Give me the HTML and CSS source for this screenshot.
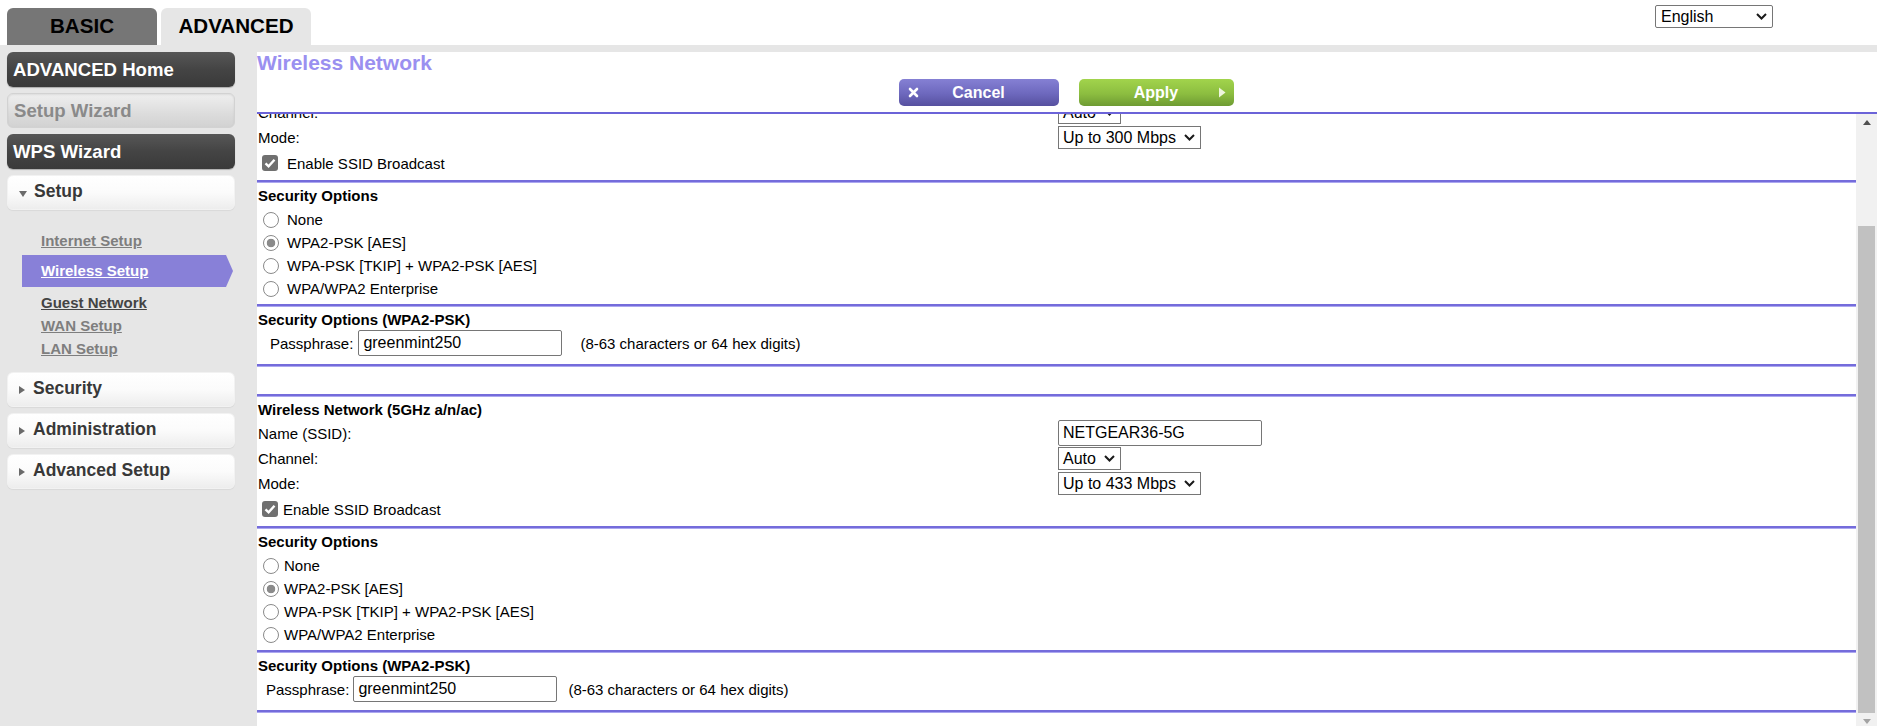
FILE: index.html
```html
<!DOCTYPE html>
<html lang="en">
<head>
<meta charset="utf-8">
<title>NETGEAR Router - Wireless Setup</title>
<link rel="stylesheet" href="styles.css">
</head>
<body>
<div class="top">
  <div class="tabs">
    <div class="tab tab-basic">BASIC</div>
    <div class="tab tab-adv">ADVANCED</div>
  </div>
  <div class="lang">
    <span>English</span>
    <svg class="chev" width="11" height="7" viewBox="0 0 11 7"><path d="M1 1 L5.5 5.5 L10 1" fill="none" stroke="#1a1a1a" stroke-width="2"/></svg>
  </div>
</div>
<div class="main">
  <nav class="side">
    <div class="btn dark">ADVANCED Home</div>
    <div class="btn light">Setup Wizard</div>
    <div class="btn dark">WPS Wizard</div>
    <div class="menu menu-open"><span class="tri tri-down"></span>Setup</div>
    <div class="sub">
      <a class="sl sl-gray">Internet Setup</a>
      <a class="sl sl-active">Wireless Setup</a>
      <a class="sl sl-dark">Guest Network</a>
      <a class="sl sl-gray">WAN Setup</a>
      <a class="sl sl-gray">LAN Setup</a>
    </div>
    <div class="menu"><span class="tri tri-right"></span>Security</div>
    <div class="menu"><span class="tri tri-right"></span>Administration</div>
    <div class="menu"><span class="tri tri-right"></span>Advanced Setup</div>
  </nav>
  <section class="content">
    <header class="chead">
      <h1>Wireless Network</h1>
      <div class="actions">
        <div class="abtn cancel">
          <span class="ic ic-left"><svg width="11" height="11" viewBox="0 0 11 11"><path d="M2 2 L9 9 M9 2 L2 9" stroke="#fff" stroke-width="2.6" stroke-linecap="round"/></svg></span>
          <span>Cancel</span>
          <span></span>
        </div>
        <div class="abtn apply">
          <span></span>
          <span>Apply</span>
          <span class="ic ic-right"><svg width="8" height="11" viewBox="0 0 8 11"><path d="M1 0.5 L7.5 5.5 L1 10.5 Z" fill="#eef6de"/></svg></span>
        </div>
      </div>
    </header>
    <div class="scrollwrap">
      <div class="scroll">
        <div class="inner">
          <!-- 2.4GHz section (scrolled; top rows above the view) -->
          <div class="row row-sel"><span>Channel:</span><span><span class="sel">Auto<svg class="chev" width="11" height="7" viewBox="0 0 11 7"><path d="M1 1 L5.5 5.5 L10 1" fill="none" stroke="#1a1a1a" stroke-width="2"/></svg></span></span></div>
          <div class="row row-sel"><span>Mode:</span><span><span class="sel">Up to 300 Mbps<svg class="chev" width="11" height="7" viewBox="0 0 11 7"><path d="M1 1 L5.5 5.5 L10 1" fill="none" stroke="#1a1a1a" stroke-width="2"/></svg></span></span></div>
          <div class="chk-row s1"><span class="cb"><svg width="16" height="16" viewBox="0 0 16 16"><path d="M3.5 8.3 L6.6 11.3 L12.5 4.8" fill="none" stroke="#fff" stroke-width="2.4"/></svg></span>Enable SSID Broadcast</div>
          <div class="line"></div>
          <div class="hdr hdr-sec">Security Options</div>
          <div class="rad-row s1"><span class="rb"></span>None</div>
          <div class="rad-row s1"><span class="rb on"></span>WPA2-PSK [AES]</div>
          <div class="rad-row s1"><span class="rb"></span>WPA-PSK [TKIP] + WPA2-PSK [AES]</div>
          <div class="rad-row s1"><span class="rb"></span>WPA/WPA2 Enterprise</div>
          <div class="gap3"></div>
          <div class="line"></div>
          <div class="hdr">Security Options (WPA2-PSK)</div>
          <div class="pass-row s1"><span class="plabel">Passphrase:</span><span class="inp">greenmint250</span><span class="hint">(8-63 characters or 64 hex digits)</span></div>
          <div class="line"></div>
          <div class="blank"></div>
          <!-- 5GHz section -->
          <div class="line"></div>
          <div class="hdr">Wireless Network (5GHz a/n/ac)</div>
          <div class="row row-in"><span>Name (SSID):</span><span><span class="inp wide">NETGEAR36-5G</span></span></div>
          <div class="row row-sel"><span>Channel:</span><span><span class="sel">Auto<svg class="chev" width="11" height="7" viewBox="0 0 11 7"><path d="M1 1 L5.5 5.5 L10 1" fill="none" stroke="#1a1a1a" stroke-width="2"/></svg></span></span></div>
          <div class="row row-sel"><span>Mode:</span><span><span class="sel">Up to 433 Mbps<svg class="chev" width="11" height="7" viewBox="0 0 11 7"><path d="M1 1 L5.5 5.5 L10 1" fill="none" stroke="#1a1a1a" stroke-width="2"/></svg></span></span></div>
          <div class="chk-row s2"><span class="cb"><svg width="16" height="16" viewBox="0 0 16 16"><path d="M3.5 8.3 L6.6 11.3 L12.5 4.8" fill="none" stroke="#fff" stroke-width="2.4"/></svg></span>Enable SSID Broadcast</div>
          <div class="line"></div>
          <div class="hdr hdr-sec">Security Options</div>
          <div class="rad-row s2"><span class="rb"></span>None</div>
          <div class="rad-row s2"><span class="rb on"></span>WPA2-PSK [AES]</div>
          <div class="rad-row s2"><span class="rb"></span>WPA-PSK [TKIP] + WPA2-PSK [AES]</div>
          <div class="rad-row s2"><span class="rb"></span>WPA/WPA2 Enterprise</div>
          <div class="gap3"></div>
          <div class="line"></div>
          <div class="hdr">Security Options (WPA2-PSK)</div>
          <div class="pass-row s2"><span class="plabel">Passphrase:</span><span class="inp">greenmint250</span><span class="hint">(8-63 characters or 64 hex digits)</span></div>
          <div class="line"></div>
          <div class="blank"></div>
        </div>
      </div>
      <div class="sbar">
        <div class="sb-arrow"><span class="sb-up"></span></div>
        <div class="sb-space"></div>
        <div class="sb-thumb"></div>
        <div class="sb-arrow"><span class="sb-down"></span></div>
      </div>
    </div>
  </section>
</div>
</body>
</html>
```

FILE: styles.css
```css
* { box-sizing: border-box; }
html, body { margin: 0; height: 100%; }
body {
  font-family: "Liberation Sans", Arial, sans-serif;
  background: #fff;
  color: #000;
  overflow: hidden;
}

/* top bar */
.top {
  height: 45px;
  display: flex;
  justify-content: space-between;
  align-items: flex-start;
}
.tabs { display: flex; gap: 4px; padding: 8px 0 0 7px; }
.tab {
  width: 150px;
  height: 37px;
  border-radius: 6px 6px 0 0;
  font-weight: bold;
  font-size: 20.6px;
  display: flex;
  align-items: center;
  justify-content: center;
  padding-bottom: 1px;
  color: #000;
}
.tab-basic { background: #767676; }
.tab-adv { background: #e6e6e6; }
.lang {
  margin: 5px 104px 0 0;
  width: 118px;
  height: 23px;
  border: 1px solid #767676;
  border-radius: 2px;
  padding: 0 5px 0 5px;
  display: flex;
  align-items: center;
  justify-content: space-between;
  font-size: 16px;
}

/* main */
.main {
  display: flex;
  height: calc(100% - 45px);
  background: #e6e6e6;
  padding-top: 7px;
}
.side { width: 257px; flex: none; padding-left: 7px; }
.btn {
  width: 228px;
  height: 35px;
  border-radius: 6px;
  margin-bottom: 6px;
  display: flex;
  align-items: center;
  padding-left: 6px;
  font-weight: bold;
  font-size: 18.6px;
}
.dark {
  background: linear-gradient(#575757, #444 50%, #3a3a3a);
  color: #fff;
  box-shadow: 0 1px 1px rgba(0,0,0,0.25);
}
.light {
  background: linear-gradient(#efefef, #dcdcdc 60%, #d2d2d2);
  color: #8a8a8a;
  border: 1px solid #d2d2d2;
  box-shadow: inset 0 1px 2px rgba(0,0,0,0.08);
}
.menu {
  width: 228px;
  height: 35px;
  border-radius: 6px;
  margin-bottom: 6px;
  display: flex;
  align-items: center;
  padding: 0 0 2px 11px;
  gap: 7px;
  font-weight: bold;
  font-size: 17.5px;
  color: #383838;
  background: linear-gradient(#ffffff, #fbfbfb 50%, #ededed);
  border: 1px solid #f2f2f2;
  box-shadow: 0 1px 1px rgba(0,0,0,0.06);
}
.menu-open { margin-bottom: 0; }
.tri { width: 0; height: 0; display: inline-block; }
.tri-down {
  border-left: 4px solid transparent;
  border-right: 4px solid transparent;
  border-top: 6px solid #6a6a6a;
  margin-top: 5px;
}
.tri-right {
  border-top: 4px solid transparent;
  border-bottom: 4px solid transparent;
  border-left: 6px solid #6a6a6a;
  margin-top: 3px;
  margin-right: 1px;
}
.sub { padding: 19px 0 12px 15px; display: flex; flex-direction: column; }
.sl {
  height: 23px;
  display: flex;
  align-items: center;
  padding-left: 19px;
  font-weight: bold;
  font-size: 15px;
  text-decoration: underline;
}
.sl-gray { color: #7e7e7e; }
.sl-dark { color: #444; }
.sl-active {
  height: 32px;
  width: 211px;
  margin: 3px 0 4px;
  background: #8880d8;
  color: #fff;
  padding-bottom: 1px;
  clip-path: polygon(0 0, calc(100% - 7px) 0, 100% 50%, calc(100% - 7px) 100%, 0 100%);
}

/* content */
.content {
  flex: 1;
  min-width: 0;
  display: flex;
  flex-direction: column;
  background: #fff;
}
.chead { padding-bottom: 6px; border-bottom: 2px solid #6b63d8; }
.chead h1 {
  margin: 0;
  font-size: 21px;
  line-height: 22px;
  font-weight: bold;
  color: #9a90f0;
}
.actions { display: flex; justify-content: center; gap: 20px; margin-top: 5px; padding-right: 2px; }
.abtn {
  height: 27px;
  border-radius: 5px;
  color: #fff;
  font-weight: bold;
  font-size: 16px;
  display: grid;
  grid-template-columns: 1fr auto 1fr;
  align-items: center;
}
.cancel { width: 160px; background: linear-gradient(#8580d4, #6d68bd 55%, #56509f); }
.apply { width: 155px; background: linear-gradient(#a2d44c, #8cbd40 55%, #6e9b33); }
.ic { display: flex; align-items: center; }
.ic-left { padding-left: 9px; }
.ic-right { justify-content: flex-end; padding-right: 8px; }

.scrollwrap { flex: 1; min-height: 0; display: flex; }
.scroll { flex: 1; min-width: 0; overflow: hidden; }
.inner { margin-top: -14px; font-size: 15px; }

.line {
  height: 3px;
  border-top: 2px solid #746cdb;
  border-bottom: 1px solid #aca7f0;
}
.hdr {
  height: 23px;
  padding: 4px 0 0 1px;
  line-height: 18px;
  font-weight: bold;
}
.hdr-sec { height: 26px; }
.row {
  display: grid;
  grid-template-columns: 800px 1fr;
  align-items: center;
  padding-left: 1px;
}
.row-in { height: 26px; }
.row-sel { height: 25px; }
.inp {
  display: inline-flex;
  align-items: center;
  height: 26px;
  width: 204px;
  border: 1px solid #767676;
  border-radius: 2px;
  padding: 0 4px;
  font-size: 16px;
  vertical-align: middle;
}
.sel {
  display: inline-flex;
  align-items: center;
  gap: 8px;
  height: 23px;
  border: 1px solid #767676;
  padding: 0 5px 0 4px;
  font-size: 16px;
  vertical-align: middle;
}
.chev { display: block; flex: none; }

.chk-row {
  height: 30px;
  display: flex;
  align-items: center;
  padding: 0 0 4px 5px;
}
.cb {
  width: 16px;
  height: 16px;
  border-radius: 3px;
  background: #707070;
  display: inline-block;
  flex: none;
}
.cb svg { display: block; }
.chk-row.s1 .cb { margin-right: 9px; }
.chk-row.s2 .cb { margin-right: 5px; }

.rad-row {
  height: 23px;
  display: flex;
  align-items: center;
  padding: 0 0 2px 6px;
}
.rb {
  width: 16px;
  height: 16px;
  border-radius: 50%;
  border: 1px solid #8a8a8a;
  background: #fff;
  flex: none;
}
.rb.on { background: radial-gradient(circle, #8a8a8a 0 4px, #fff 4.6px); border-color: #8a8a8a; }
.rad-row.s1 .rb { margin-right: 8px; }
.rad-row.s2 .rb { margin-right: 5px; }
.gap3 { height: 3px; }

.pass-row {
  height: 34px;
  padding-bottom: 8px;
  display: flex;
  align-items: center;
}
.pass-row.s1 { padding-left: 13px; }
.pass-row.s1 .inp { margin-left: 5px; }
.pass-row.s1 .hint { margin-left: 18px; }
.pass-row.s2 { padding-left: 9px; }
.pass-row.s2 .inp { margin-left: 4px; }
.pass-row.s2 .hint { margin-left: 11px; }
.blank { height: 27px; }

/* scrollbar */
.sbar {
  width: 21px;
  flex: none;
  background: #f1f1f1;
  display: flex;
  flex-direction: column;
  align-items: center;
}
.sb-arrow { height: 17px; width: 100%; display: flex; align-items: center; justify-content: center; flex: none; }
.sb-up {
  width: 0; height: 0;
  border-left: 4px solid transparent;
  border-right: 4px solid transparent;
  border-bottom: 5px solid #505050;
}
.sb-down {
  width: 0; height: 0;
  border-left: 4px solid transparent;
  border-right: 4px solid transparent;
  border-top: 5px solid #a3a3a3;
}
.sb-space { height: 95px; flex: none; }
.sb-thumb { width: 17px; height: 487px; background: #c1c1c1; flex: none; }
```
